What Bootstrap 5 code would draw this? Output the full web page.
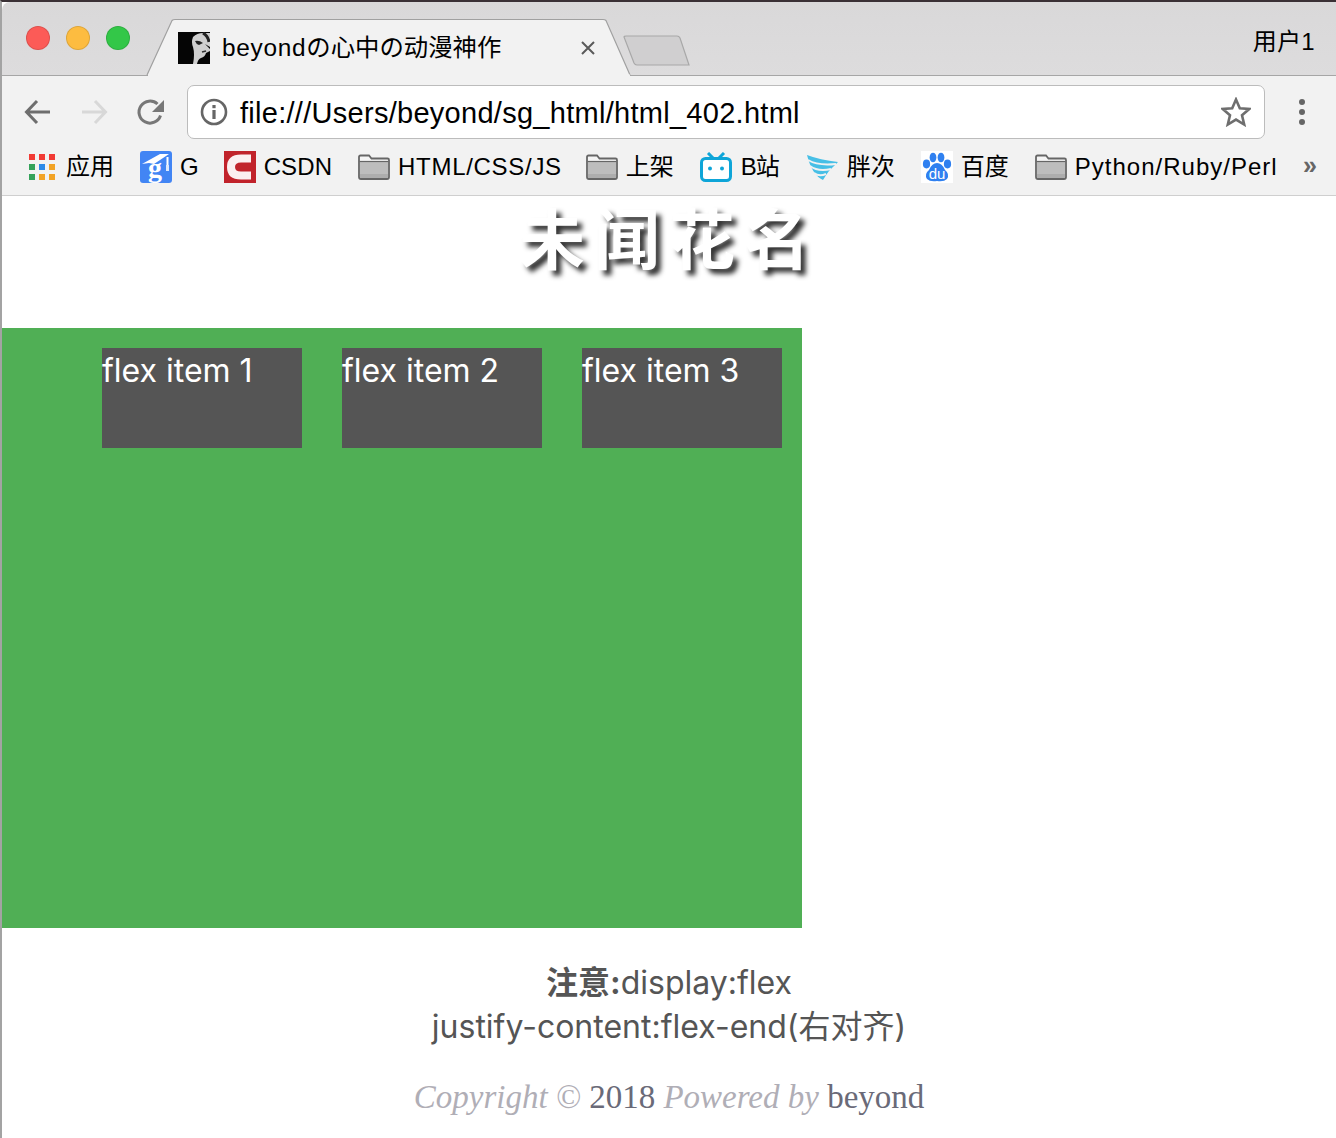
<!DOCTYPE html>
<html lang="zh-CN">
<head>
<meta charset="utf-8">
<title>未闻花名</title>
<link href="https://cdn.jsdelivr.net/npm/bootstrap@5.3.0/dist/css/bootstrap.min.css" rel="stylesheet">
<style>
html,body{margin:0;background:#fff;}
body{font-family:"Liberation Sans","Noto Sans CJK SC",sans-serif;color:#000;overflow:hidden;}
.win{width:1336px;height:1138px;border-left:2px solid #a3a3a3;border-top:2px solid #3a3035;display:flex;flex-direction:column;overflow:hidden;}
.strip{height:74px;flex:none;background:linear-gradient(#d9d8d9,#dddcdd);border-bottom:1px solid #a6a6a6;position:relative;border-top-left-radius:8px;}
.light{width:24px;height:24px;border-radius:50%;border:1px solid rgba(0,0,0,.12);}
.lights{padding:24px 0 0 24px;gap:16px;}
.tabshape{position:absolute;left:144px;top:16px;}
.tabface{position:absolute;left:176px;top:30px;width:32px;height:32px;}
.tabtitle{position:absolute;left:220px;top:28px;font-size:24.4px;line-height:36px;white-space:nowrap;}
.tabtitle span{letter-spacing:.7px;}
.tabx{position:absolute;left:578px;top:38px;}
.newtab{position:absolute;left:621px;top:32px;}
.user{position:absolute;right:21px;top:22px;font-size:24px;line-height:36px;letter-spacing:.3px;}
.tools{height:64px;flex:none;background:#f2f2f2;position:relative;padding-top:9px;}
.addrbox{width:1078px;height:54px;margin-left:185px;background:#fff;border:1px solid #bcbcbc;border-radius:7px;padding:0 13px 0 12px;}
.url{font-size:29px;line-height:36px;margin-left:12px;padding-top:2px;white-space:nowrap;flex:1;letter-spacing:.28px;}
.toolicon{position:absolute;top:21px;}
.marks{height:56px;flex:none;background:#f2f2f2;border-bottom:1px solid #cfcfcf;padding:0 0 2px 27px;gap:26px;white-space:nowrap;position:relative;}
.markitem{display:flex;align-items:center;gap:8px;font-size:24px;line-height:32px;}
.appslabel{margin-left:3px;}
.glabel{margin-right:-1px;}
.track1{letter-spacing:.1px;}
.track2{letter-spacing:.7px;margin-right:-2px;}
.track3{letter-spacing:1px;}
.trackb{letter-spacing:-1px;margin:0 1px;}
.paddedlabel{margin-left:1px;}
.more{font-size:25px;font-weight:700;color:#666;position:absolute;left:1301px;top:9px;line-height:32px;}
.pagehead{height:132px;flex:none;margin:0;text-align:center;font-size:66px;font-weight:700;line-height:78px;letter-spacing:9px;color:#fff;text-shadow:5px 5px 5px #333;font-family:"Noto Sans CJK SC",sans-serif;}
.flexbox{width:800px;height:600px;flex:none;background:#50af55;}
.flexcell{width:200px;height:100px;margin:20px 20px 0 20px;background:#555;color:#fff;font-family:Inter,"Noto Sans CJK SC",sans-serif;font-size:32px;line-height:46px;white-space:nowrap;}
.notes{margin-top:33px;text-align:center;color:#555;font-size:32px;line-height:44px;font-family:Inter,"Noto Sans CJK SC",sans-serif;}
.notes b{font-weight:700;}
.copy{margin-top:26px;text-align:center;font-family:"Liberation Serif",serif;font-size:33px;line-height:44px;color:#6a6a78;}
.copy i{color:#b0aeb6;}
</style>
</head>
<body>
<div class="win">
  <div class="strip">
    <svg class="tabshape" width="490" height="58" viewBox="0 0 490 58">
      <path d="M1 57 L26 2.500 Q27 1.500 29 1.500 L457 1.500 Q459 1.500 460 2.500 L484 57" fill="#f2f2f2" stroke="#a0a0a0" stroke-width="1.200"/>
      <path d="M2 57.400H484" stroke="#f2f2f2" stroke-width="2"/>
    </svg>
    <div class="d-flex lights">
      <div class="light" style="background:#fc5b57"></div>
      <div class="light" style="background:#fdbc40"></div>
      <div class="light" style="background:#33c748"></div>
    </div>
    <svg class="tabface" viewBox="0 0 32 32">
      <rect width="32" height="32" fill="#050505"/>
      <path d="M15 5Q19 1 25 1L32 1V15L27 12L32 17V19L28 21Q27 25 23 26Q20 27 19 32H15Q17 22 15 15Q13 10 15 5Z" fill="#cfcfcf"/>
      <path d="M17 9Q21 8 25 11L21 13Q18 12 17 9Z" fill="#222"/>
      <path d="M24 20L28 19" stroke="#333" stroke-width="1.500"/>
      <path d="M25 1Q30 4 31 10" stroke="#222" stroke-width="3" fill="none"/>
    </svg>
    <div class="tabtitle"><span>beyond</span>の心中の动漫神作</div>
    <svg class="tabx" width="16" height="16" viewBox="0 0 16 16"><path d="M2 2L14 14M14 2L2 14" stroke="#5a5a5a" stroke-width="2"/></svg>
    <svg class="newtab" width="70" height="34" viewBox="0 0 70 34"><path d="M1 3Q1 2 3 2L54 2Q56 2 57 4L66 31L14 31Q12 31 11 29Z" fill="#d0cfd0" stroke="#a8a8a8" stroke-width="1.200"/></svg>
    <div class="user">用户1</div>
  </div>
  <div class="tools">
    <svg class="toolicon" style="left:21px" width="30" height="30" viewBox="0 0 30 30"><path d="M27 15H4M14 4L3.500 15 14 26" fill="none" stroke="#6e6e6e" stroke-width="3"/></svg>
    <svg class="toolicon" style="left:77px" width="30" height="30" viewBox="0 0 30 30"><path d="M3 15H26M16 4L26.500 15 16 26" fill="none" stroke="#d8d8d8" stroke-width="3"/></svg>
    <svg class="toolicon" style="left:134px" width="30" height="30" viewBox="0 0 30 30"><path d="M24.500 18.500A11 11 0 1 1 21.500 7" fill="none" stroke="#777" stroke-width="3"/><path d="M28 3V15H16Z" fill="#777"/></svg>
    <div class="addrbox d-flex align-items-center">
      <svg width="28" height="28" viewBox="0 0 28 28"><circle cx="14" cy="14" r="12" fill="none" stroke="#666" stroke-width="2.600"/><rect x="12.400" y="12" width="3.200" height="9" fill="#666"/><rect x="12.400" y="7" width="3.200" height="3.200" fill="#666"/></svg>
      <div class="url">file:///Users/beyond/sg_html/html_402.html</div>
      <svg width="30" height="30" viewBox="0 0 30 30"><path d="M15 2.500L18.800 11.200 28.200 12 21 18.300 23.200 27.500 15 22.600 6.800 27.500 9 18.300 1.800 12 11.200 11.200Z" fill="none" stroke="#6e6e6e" stroke-width="2.600"/></svg>
    </div>
    <svg class="toolicon" style="left:1295px;top:22px" width="10" height="28" viewBox="0 0 10 28"><circle cx="5" cy="4" r="3" fill="#666"/><circle cx="5" cy="14" r="3" fill="#666"/><circle cx="5" cy="24" r="3" fill="#666"/></svg>
  </div>
  <div class="marks d-flex align-items-center">
    <div class="markitem">
      <svg width="26" height="26" viewBox="0 0 26 26">
        <rect x="0" y="0" width="6" height="6" fill="#f23b35"/><rect x="10" y="0" width="6" height="6" fill="#f23b35"/><rect x="20" y="0" width="6" height="6" fill="#f23b35"/>
        <rect x="0" y="10" width="6" height="6" fill="#34a25a"/><rect x="10" y="10" width="6" height="6" fill="#2c8ae8"/><rect x="20" y="10" width="6" height="6" fill="#f2a326"/>
        <rect x="0" y="20" width="6" height="6" fill="#34a25a"/><rect x="10" y="20" width="6" height="6" fill="#f2a326"/><rect x="20" y="20" width="6" height="6" fill="#f2a326"/>
      </svg>
      <span class="appslabel">应用</span>
    </div>
    <div class="markitem">
      <svg width="32" height="32" viewBox="0 0 32 32">
        <rect width="32" height="32" rx="3" fill="#4285f4"/>
        <text x="15" y="26" text-anchor="middle" font-family="Liberation Serif" font-weight="700" font-size="28" fill="#fff">g</text>
        <path d="M2 13L20 3 29 3 20 9 14 13 9 12Z" fill="#fff"/>
        <rect x="26.500" y="6" width="2" height="9" fill="#fff"/><rect x="26" y="14" width="3" height="6" fill="#dce8fd"/>
      </svg>
      <span class="glabel">G</span>
    </div>
    <div class="markitem">
      <svg width="32" height="32" viewBox="0 0 32 32">
        <rect width="32" height="32" fill="#c1232b"/>
        <path d="M27 7.500H17Q7 7.500 7 16T17 24.500H27" fill="none" stroke="#fff" stroke-width="8" stroke-opacity=".93"/>
      </svg>
      <span class="track1">CSDN</span>
    </div>
    <div class="markitem">
      <svg width="32" height="26" viewBox="0 0 32 26"><use href="#fold"/></svg>
      <span class="track2">HTML/CSS/JS</span>
    </div>
    <div class="markitem">
      <svg width="32" height="26" viewBox="0 0 32 26"><use href="#fold"/></svg>
      <span>上架</span>
    </div>
    <div class="markitem">
      <svg width="32" height="30" viewBox="0 0 32 30">
        <path d="M8 1L13 6M24 1L19 6" stroke="#0ea5d8" stroke-width="3"/>
        <rect x="1.500" y="6.500" width="29" height="22" rx="4" fill="#fff" stroke="#0ea5d8" stroke-width="3"/>
        <circle cx="10" cy="16.500" r="2" fill="#0ea5d8"/><circle cx="22" cy="16.500" r="2" fill="#0ea5d8"/>
      </svg>
      <span class="trackb">B站</span>
    </div>
    <div class="markitem">
      <svg width="32" height="28" viewBox="0 0 32 28">
        <path d="M1 2Q14 7 32 9Q28 13 23 18Q20 22 17 27Q6 22 1 2Z" fill="#47bfe6"/>
        <path d="M2 7Q12 13 30 11M4 13Q12 19 25 16M8 20Q13 24 20 21" fill="none" stroke="#f2f2f2" stroke-width="2"/>
      </svg>
      <span class="paddedlabel">胖次</span>
    </div>
    <div class="markitem">
      <svg width="32" height="32" viewBox="0 0 32 32">
        <rect width="32" height="32" fill="#fff"/>
        <ellipse cx="5.500" cy="13" rx="3.600" ry="4.400" fill="#2f80f0"/><ellipse cx="12" cy="6.500" rx="3.400" ry="4.800" fill="#2f80f0"/><ellipse cx="20" cy="6.500" rx="3.400" ry="4.800" fill="#2f80f0"/><ellipse cx="26.500" cy="13" rx="3.600" ry="4.400" fill="#2f80f0"/>
        <path d="M16 12Q21 12 24 19Q29 23 26 28Q23 31 16 30Q9 31 6 28Q3 23 8 19Q11 12 16 12Z" fill="#2f80f0"/>
        <text x="16" y="28" text-anchor="middle" font-family="Liberation Sans" font-size="15" fill="#fff">du</text>
      </svg>
      <span>百度</span>
    </div>
    <div class="markitem">
      <svg width="32" height="26" viewBox="0 0 32 26"><use href="#fold"/></svg>
      <span class="track3">Python/Ruby/Perl</span>
    </div>
    <div class="more">»</div>
  </div>
  <svg width="0" height="0" class="position-absolute"><defs>
    <g id="fold">
      <path d="M1 23V3Q1 1.500 2.500 1.500H11L13.500 4.500H29.500Q31 4.500 31 6V23Q31 25 29 25H3Q1 25 1 23Z" fill="#f4f4f4" stroke="#666" stroke-width="1.800"/>
      <rect x="2" y="8" width="28" height="16" fill="#bdbdbd"/>
      <rect x="2" y="20" width="28" height="4" fill="#adadad"/>
      <path d="M1.500 7.500H30.500" stroke="#666" stroke-width="1.200"/>
    </g>
  </defs></svg>
  <h1 class="pagehead">未闻花名</h1>
  <div class="flexbox d-flex justify-content-end">
    <div class="flexcell">flex item 1</div>
    <div class="flexcell">flex item 2</div>
    <div class="flexcell">flex item 3</div>
  </div>
  <div class="notes"><b>注意:</b>display:flex<br>justify-content:flex-end(右对齐)</div>
  <div class="copy"><i>Copyright ©</i> 2018 <i>Powered by</i> beyond</div>
</div>
</body>
</html>
